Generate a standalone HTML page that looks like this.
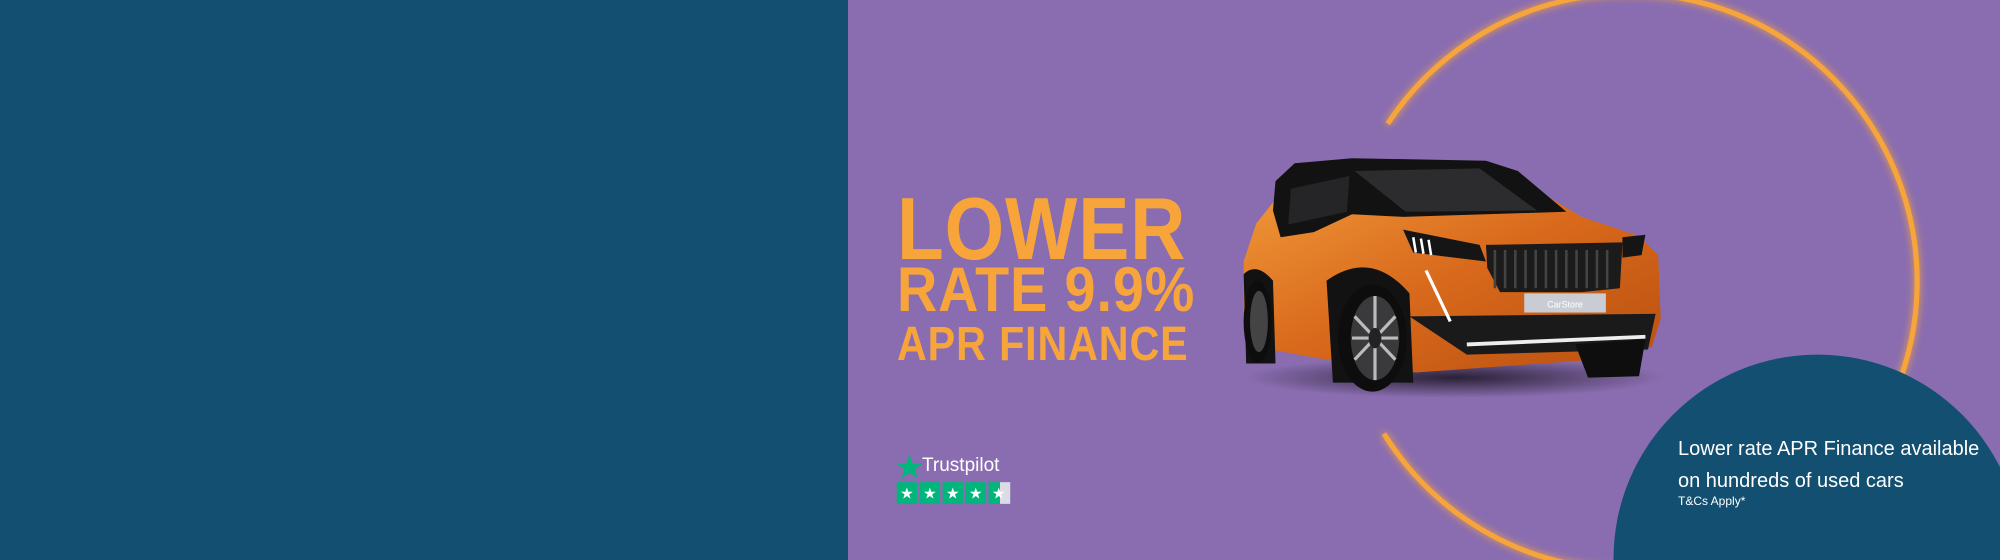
<!DOCTYPE html>
<html><head><meta charset="utf-8"><style>
html,body{margin:0;padding:0;overflow:hidden}
body{width:2000px;height:560px;position:relative;overflow:hidden;background:#8a6db0;font-family:"Liberation Sans",sans-serif}
.left{position:absolute;left:0;top:0;width:848px;height:560px;background:#124f70}
svg.bg{position:absolute;left:0;top:0;display:block}
.h{position:absolute;left:897px;color:#f7a53b;font-weight:bold;white-space:nowrap;transform-origin:0 0;letter-spacing:1px;line-height:1.15}
.t{position:absolute;color:#fff;white-space:nowrap}
</style></head><body>
<div class="left"></div>
<svg class="bg" width="2000" height="560" viewBox="0 0 1568 439">
<defs>
<filter id="glow" x="-20%" y="-20%" width="140%" height="140%"><feGaussianBlur stdDeviation="3" result="b"/><feMerge><feMergeNode in="b"/><feMergeNode in="SourceGraphic"/></feMerge></filter>
<linearGradient id="body" x1="0" y1="0" x2="1" y2="1"><stop offset="0" stop-color="#f29a3a"/><stop offset="0.5" stop-color="#d8691c"/><stop offset="1" stop-color="#b9500f"/></linearGradient>
<radialGradient id="sh" cx="0.5" cy="0.5" r="0.5"><stop offset="0" stop-color="#000" stop-opacity="0.7"/><stop offset="1" stop-color="#000" stop-opacity="0"/></radialGradient>
</defs>
<path d="M1088,97 A226,226 0 1 1 1085,340" fill="none" stroke="#f7a53b" stroke-width="4" filter="url(#glow)"/>
<circle cx="1425" cy="438" r="160" fill="#124f70"/>
<ellipse cx="1140" cy="296" rx="165" ry="16" fill="url(#sh)"/>
<path d="M975,205 L985,175 L1005,150 L1060,140 L1190,140 L1240,170 L1285,185 L1300,200 L1302,250 L1295,272 L1250,282 L1110,292 L1040,282 L985,272 L975,250 Z" fill="url(#body)"/>
<path d="M1000,142 L1015,128 L1060,124 L1165,126 L1190,134 L1228,166 L1100,170 L1060,168 L1030,182 L1004,186 L998,165 Z" fill="#121212"/>
<path d="M1062,134 L1160,132 L1205,165 L1102,166 Z" fill="#2c2c2e"/>
<path d="M1012,148 L1058,138 L1056,166 L1010,176 Z" fill="#252528"/>
<path d="M1100,180 L1160,192 L1165,205 L1108,198 Z" fill="#151515"/>
<path d="M1108,186 L1110,198 M1114,187 L1116,199 M1120,188 L1122,200" stroke="#fff" stroke-width="2"/>
<path d="M1165,192 L1272,190 L1270,226 L1240,229 L1176,229 L1166,210 Z" fill="#1b1b1b"/>
<path d="M1172,196 V226 M1180,196 V226 M1188,196 V226 M1196,196 V226 M1204,196 V226 M1212,196 V226 M1220,196 V226 M1228,196 V226 M1236,196 V226 M1244,196 V226 M1252,196 V226 M1260,196 V226" stroke="#444" stroke-width="2"/>
<path d="M1272,186 L1290,184 L1287,200 L1272,202 Z" fill="#151515"/>
<rect x="1195" y="230" width="64" height="15" fill="#c9cdd3"/>
<text x="1227" y="241" font-size="7" fill="#fff" text-anchor="middle" font-family="Liberation Sans">CarStore</text>
<path d="M1105,248 L1298,246 L1292,274 L1150,278 Z" fill="#1a1a1a"/>
<path d="M1150,270 L1290,264" stroke="#eee" stroke-width="3"/>
<path d="M1118,212 L1137,252" stroke="#fff" stroke-width="2.5"/>
<path d="M1040,220 Q1075,195 1105,230 L1108,300 L1045,300 Z" fill="#121212"/>
<ellipse cx="1076" cy="265" rx="27" ry="42" fill="#0d0d0d"/>
<ellipse cx="1078" cy="265" rx="19" ry="33" fill="#3a3a3d"/>
<path d="M1078,232 L1078,298 M1062,248 L1094,282 M1062,282 L1094,248 M1060,265 L1096,265" stroke="#bbb" stroke-width="2.5"/>
<ellipse cx="1078" cy="265" rx="5" ry="8" fill="#222"/>
<path d="M975,215 Q985,205 998,220 L1000,285 L977,285 Z" fill="#121212"/>
<ellipse cx="986" cy="252" rx="11" ry="32" fill="#0d0d0d"/>
<ellipse cx="987" cy="252" rx="7" ry="24" fill="#444"/>
<path d="M1235,270 L1290,266 L1285,295 L1245,296 Z" fill="#0e0e0e"/>
<path d="M713,356 L715.5,363.5 L723,363.5 L717,368 L719.5,375 L713,370.5 L706.5,375 L709,368 L703,363.5 L710.5,363.5 Z" fill="#00b67a"/>
<g fill="#00b67a"><rect x="703" y="378" width="16" height="17"/><rect x="721" y="378" width="16" height="17"/><rect x="739" y="378" width="16" height="17"/><rect x="757" y="378" width="16" height="17"/><rect x="775" y="378" width="9" height="17"/></g>
<rect x="784" y="378" width="8" height="17" fill="#dcdce6"/>
<g fill="#fff" font-size="12" text-anchor="middle" font-family="DejaVu Sans"><text x="711" y="391">★</text><text x="729" y="391">★</text><text x="747" y="391">★</text><text x="765" y="391">★</text><text x="783" y="391">★</text></g>
</svg>
<div class="h" style="top:178px;font-size:88px;transform:scaleX(0.87)">LOWER</div>
<div class="h" style="top:254px;font-size:63px;transform:scaleX(0.885)">RATE 9.9%</div>
<div class="h" style="top:317px;font-size:48px;transform:scaleX(0.86)">APR FINANCE</div>
<div class="t" style="left:922px;top:455px;font-size:19px">Trustpilot</div>
<div class="t" style="left:1678px;top:433px;font-size:20px;line-height:32px">Lower rate APR Finance available<br>on hundreds of used cars</div>
<div class="t" style="left:1678px;top:494px;font-size:12px">T&amp;Cs Apply*</div>
</body></html>
